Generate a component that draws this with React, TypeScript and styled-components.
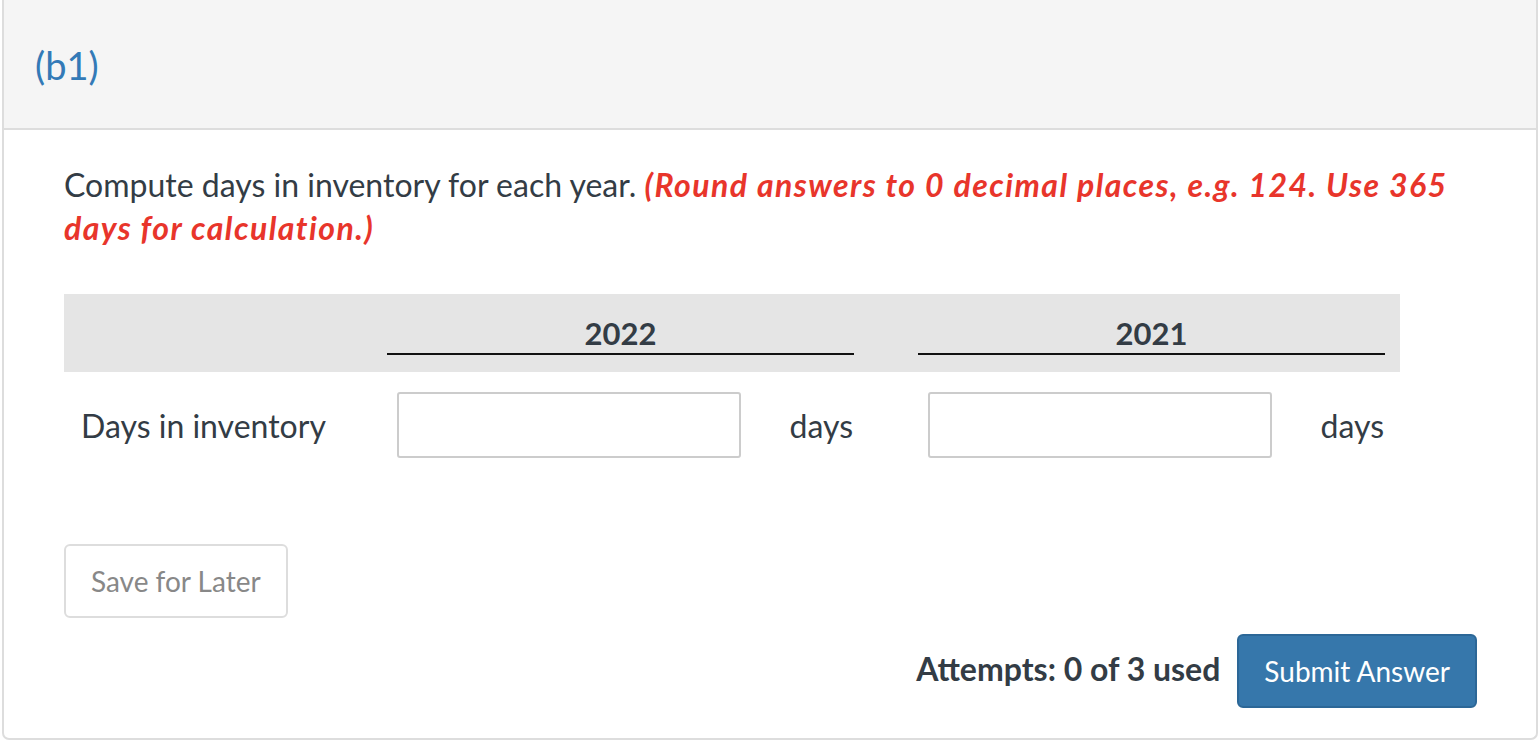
import styled, { createGlobalStyle, css } from "styled-components";

const GlobalStyle = createGlobalStyle`
  html, body {
    margin: 0;
    padding: 0;
    background: #fff;
  }
  body {
    font-family: Lato, "Noto Sans", sans-serif;
    color: #333c45;
  }
`;

const Panel = styled.section`
  margin-left: 2px;
  width: 1536px;
  height: 740px;
  box-sizing: border-box;
  border: 2px solid #dddddd;
  border-top: none;
  border-radius: 0 0 7px 7px;
  background: #fff;
  overflow: hidden;
`;

const PanelHeader = styled.header`
  height: 130px;
  box-sizing: border-box;
  display: flex;
  align-items: center;
  padding: 2px 31px 0;
  background: #f5f5f5;
  border-bottom: 2px solid #dddddd;
`;

const PartLabel = styled.h2`
  margin: 0;
  font-size: 38px;
  font-weight: 400;
  color: #337ab7;
`;

const PanelBody = styled.div`
  padding: 33px 59px 0 60px;
`;

const Question = styled.p`
  margin: 0;
  font-size: 32px;
  line-height: 43px;
`;

const Hint = styled.em`
  color: #e8352b;
  font-weight: 700;
  letter-spacing: 1.45px;
`;

const rowGrid = css`
  width: 1336px;
  box-sizing: border-box;
  display: grid;
  grid-template-columns: 242px 467px 467px;
  column-gap: 64px;
  padding: 0 16px 0 17px;
`;

const HeadRow = styled.div`
  ${rowGrid};
  margin-top: 45px;
  background: #e5e5e5;
  padding-top: 20px;
  padding-bottom: 17px;
`;

const YearText = styled.div`
  text-align: center;
  font-size: 31px;
  font-weight: 700;
  line-height: 39px;
  border-bottom: 2px solid #111;
`;

const BodyRow = styled.div`
  ${rowGrid};
  padding-top: 20px;
  align-items: center;
`;

const RowLabel = styled.div`
  font-size: 32px;
  white-space: nowrap;
`;

const AnswerCell = styled.div`
  display: flex;
  align-items: center;
  justify-content: space-between;
  padding-left: 10px;
`;

const AnswerInput = styled.input`
  width: 344px;
  height: 66px;
  box-sizing: border-box;
  border: 2px solid #cccccc;
  border-radius: 3px;
  font-family: inherit;
  font-size: 28px;
  padding: 0 12px;
  outline: none;
`;

const Unit = styled.span`
  font-size: 32px;
  padding-right: 1px;
`;

const SaveButton = styled.button`
  margin-top: 86px;
  height: 74px;
  padding: 0 25px;
  background: #fff;
  border: 2px solid #dddddd;
  border-radius: 6px;
  color: #888888;
  font-family: inherit;
  font-size: 28px;
`;

const Footer = styled.div`
  margin-top: 16px;
  display: flex;
  justify-content: flex-end;
  align-items: center;
  gap: 17px;
`;

const Attempts = styled.span`
  font-size: 32px;
  font-weight: 700;
  margin-top: -6px;
`;

const SubmitButton = styled.button`
  height: 74px;
  padding: 0 25px;
  background: #3677ab;
  border: 2px solid #2c6797;
  border-radius: 6px;
  color: #fff;
  font-family: inherit;
  font-size: 28px;
`;

export default function App() {
  return (
    <>
      <GlobalStyle />
      <Panel>
        <PanelHeader>
          <PartLabel>(b1)</PartLabel>
        </PanelHeader>
        <PanelBody>
          <Question>
            Compute days in inventory for each year.{" "}
            <Hint>
              (Round answers to 0 decimal places, e.g. 124. Use 365 days for
              calculation.)
            </Hint>
          </Question>
          <HeadRow>
            <div />
            <YearText>2022</YearText>
            <YearText>2021</YearText>
          </HeadRow>
          <BodyRow>
            <RowLabel>Days in inventory</RowLabel>
            <AnswerCell>
              <AnswerInput type="text" aria-label="Days in inventory 2022" />
              <Unit>days</Unit>
            </AnswerCell>
            <AnswerCell>
              <AnswerInput type="text" aria-label="Days in inventory 2021" />
              <Unit>days</Unit>
            </AnswerCell>
          </BodyRow>
          <SaveButton>Save for Later</SaveButton>
          <Footer>
            <Attempts>Attempts: 0 of 3 used</Attempts>
            <SubmitButton>Submit Answer</SubmitButton>
          </Footer>
        </PanelBody>
      </Panel>
    </>
  );
}
